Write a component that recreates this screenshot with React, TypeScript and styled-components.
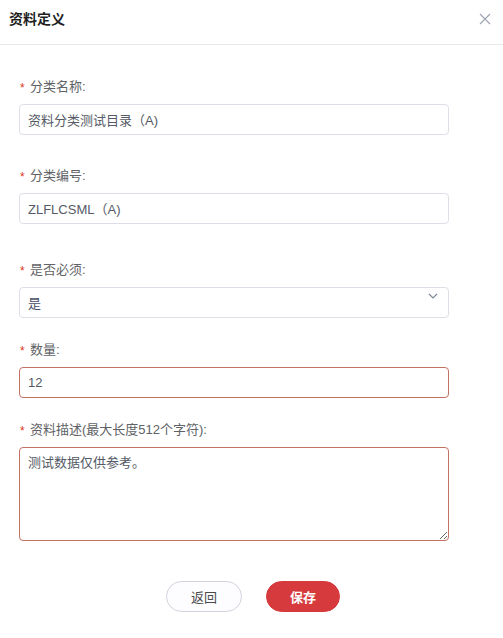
import React from 'react';
import styled, { createGlobalStyle } from 'styled-components';

const GlobalStyle = createGlobalStyle`
  html, body {
    margin: 0;
    padding: 0;
    background: #ffffff;
    font-family: "Liberation Sans", "Noto Sans CJK SC", sans-serif;
  }
  * { box-sizing: border-box; }
`;

const Dialog = styled.div`
  width: 503px;
  height: 638px;
  background: #ffffff;
`;

const Header = styled.div`
  height: 45px;
  display: flex;
  align-items: center;
  justify-content: space-between;
  padding: 0 8px 0 9px;
  border-bottom: 1px solid #e8e8e8;
`;

const Title = styled.h3`
  margin: 0;
  font-size: 14px;
  font-weight: 700;
  color: #1f1f1f;
  padding-bottom: 8px;
`;

const CloseButton = styled.button`
  width: 20px;
  height: 20px;
  padding: 0;
  border: 0;
  background: transparent;
  display: grid;
  place-content: center;
  margin-bottom: 6px;
  cursor: pointer;
`;

const Form = styled.form`
  padding: 32px 55px 0 19px;
  display: flex;
  flex-direction: column;
`;

const Field = styled.div<{ $top: number }>`
  margin-top: ${(p) => p.$top}px;
  display: flex;
  flex-direction: column;
  gap: 7px;
`;

const Label = styled.label`
  height: 20px;
  line-height: 20px;
  font-size: 13px;
  color: #606266;
  display: flex;
  align-items: center;
`;

const Star = styled.span`
  color: #e0381c;
  font-size: 12px;
  width: 11px;
  padding-left: 1px;
  margin-top: 2px;
`;

const Input = styled.input<{ $error?: boolean }>`
  width: 430px;
  height: 31px;
  border: 1px solid ${(p) => (p.$error ? '#c47262' : '#dcdfe6')};
  border-radius: 4px;
  padding: 0 8px;
  font-size: 13px;
  color: #555a66;
  font-family: inherit;
  outline: none;
`;

const SelectBox = styled.div`
  position: relative;
  width: 430px;
  height: 31px;
  border: 1px solid #dcdfe6;
  border-radius: 4px;
  padding: 0 8px;
  font-size: 13px;
  color: #474f66;
  display: flex;
  align-items: center;
`;

const Arrow = styled.span`
  position: absolute;
  right: 9px;
  top: 3px;
  display: flex;
`;

const TextArea = styled.textarea`
  width: 430px;
  height: 94px;
  border: 1px solid #c47262;
  border-radius: 4px;
  padding: 5px 8px;
  font-size: 13px;
  line-height: 20px;
  color: #555a66;
  font-family: inherit;
  resize: vertical;
  outline: none;
`;

const Actions = styled.div`
  margin: 40px -55px 0 -19px;
  display: flex;
  justify-content: center;
  gap: 24px;
  padding-left: 3px;
`;

const Button = styled.button<{ $primary?: boolean }>`
  width: ${(p) => (p.$primary ? 74 : 76)}px;
  height: 31px;
  border-radius: 16px;
  font-size: 13px;
  font-family: inherit;
  cursor: pointer;
  border: 1px solid ${(p) => (p.$primary ? '#d63a3d' : '#d4d2de')};
  background: ${(p) => (p.$primary ? '#d63a3d' : '#fdfcff')};
  color: ${(p) => (p.$primary ? '#ffffff' : '#4a4a4a')};
  font-weight: ${(p) => (p.$primary ? 700 : 400)};
`;

const App: React.FC = () => {
  return (
    <>
      <GlobalStyle />
      <Dialog>
        <Header>
          <Title>资料定义</Title>
          <CloseButton type='button'>
            <svg width='12' height='12' viewBox='0 0 12 12'>
              <path d='M1 1L11 11M11 1L1 11' stroke='#9aa3b0' strokeWidth='1.1' />
            </svg>
          </CloseButton>
        </Header>
        <Form onSubmit={(e) => e.preventDefault()}>
          <Field $top={0}>
            <Label>
              <Star>*</Star>分类名称:
            </Label>
            <Input defaultValue='资料分类测试目录（A)' />
          </Field>
          <Field $top={31}>
            <Label>
              <Star>*</Star>分类编号:
            </Label>
            <Input defaultValue='ZLFLCSML（A)' />
          </Field>
          <Field $top={36}>
            <Label>
              <Star>*</Star>是否必须:
            </Label>
            <SelectBox>
              是
              <Arrow>
                <svg width='12' height='10' viewBox='0 0 12 10'>
                  <path d='M2 3L6 7L10 3' fill='none' stroke='#7f8899' strokeWidth='1.2' />
                </svg>
              </Arrow>
            </SelectBox>
          </Field>
          <Field $top={22}>
            <Label>
              <Star>*</Star>数量:
            </Label>
            <Input $error defaultValue='12' />
          </Field>
          <Field $top={22}>
            <Label>
              <Star>*</Star>资料描述(最大长度512个字符):
            </Label>
            <TextArea defaultValue='测试数据仅供参考。' />
          </Field>
          <Actions>
            <Button type='button'>返回</Button>
            <Button type='submit' $primary>
              保存
            </Button>
          </Actions>
        </Form>
      </Dialog>
    </>
  );
};

export default App;
